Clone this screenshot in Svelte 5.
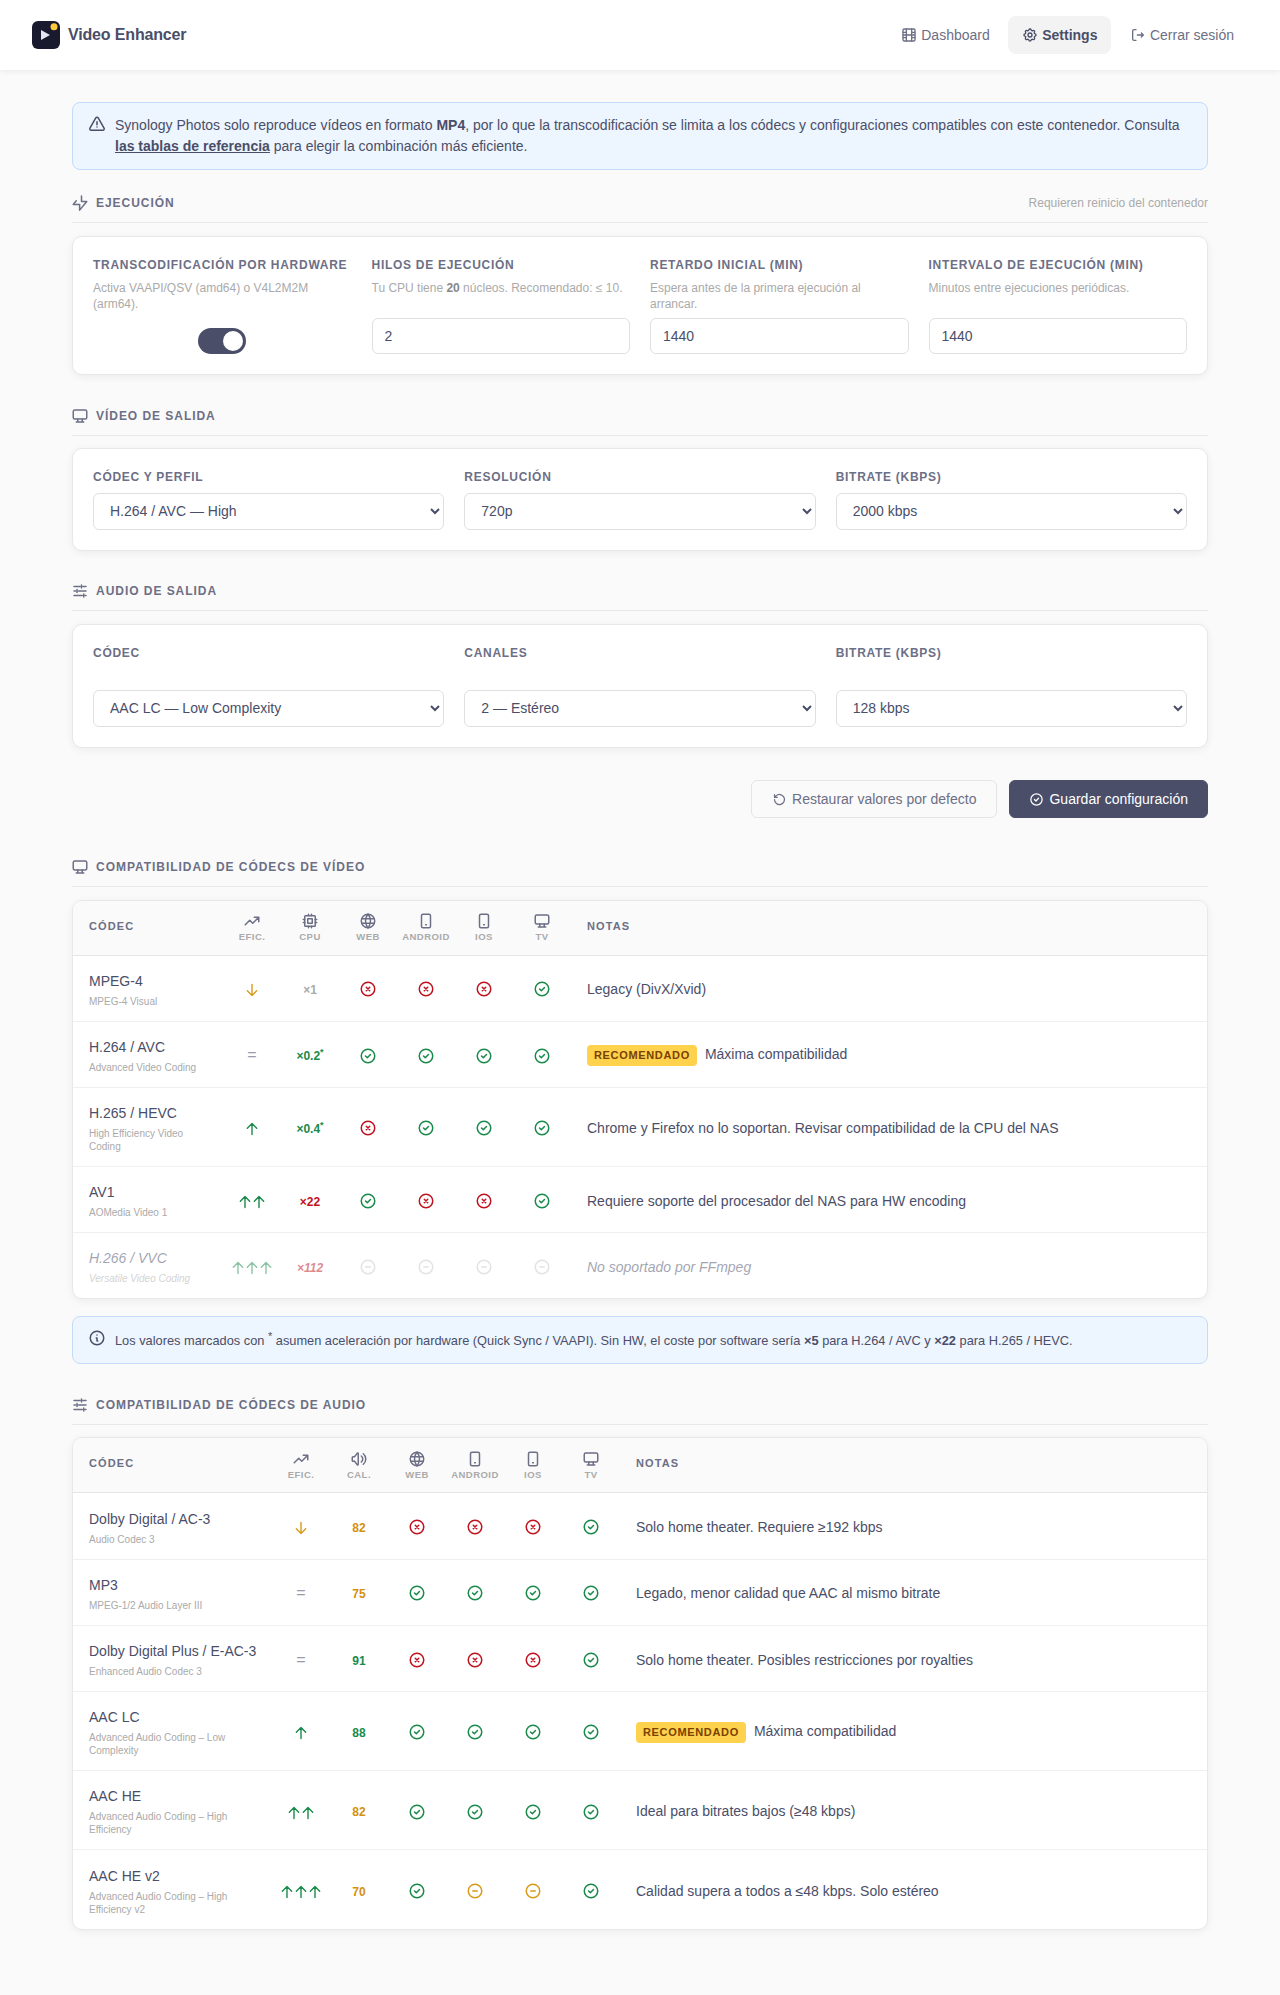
<script>
  const videoRows = [
    { name: 'MPEG-4', sub: 'MPEG-4 Visual', eff: -1, val: '×1', tone: 'muted', status: 'nnny', note: 'Legacy (DivX/Xvid)' },
    { name: 'H.264 / AVC', sub: 'Advanced Video Coding', eff: 0, val: '×0.2', star: true, tone: 'good', status: 'yyyy', badge: true, note: 'Máxima compatibilidad' },
    { name: 'H.265 / HEVC', sub: 'High Efficiency Video Coding', eff: 1, val: '×0.4', star: true, tone: 'good', status: 'nyyy', note: 'Chrome y Firefox no lo soportan. Revisar compatibilidad de la CPU del NAS' },
    { name: 'AV1', sub: 'AOMedia Video 1', eff: 2, val: '×22', tone: 'bad', status: 'ynny', note: 'Requiere soporte del procesador del NAS para HW encoding' },
    { name: 'H.266 / VVC', sub: 'Versatile Video Coding', eff: 3, val: '×112', tone: 'bad', status: 'dddd', note: 'No soportado por FFmpeg', off: true }
  ];
  const audioRows = [
    { name: 'Dolby Digital / AC-3', sub: 'Audio Codec 3', eff: -1, val: '82', tone: 'warn', status: 'nnny', note: 'Solo home theater. Requiere ≥192 kbps' },
    { name: 'MP3', sub: 'MPEG-1/2 Audio Layer III', eff: 0, val: '75', tone: 'warn', status: 'yyyy', note: 'Legado, menor calidad que AAC al mismo bitrate' },
    { name: 'Dolby Digital Plus / E-AC-3', sub: 'Enhanced Audio Codec 3', eff: 0, val: '91', tone: 'good', status: 'nnny', note: 'Solo home theater. Posibles restricciones por royalties' },
    { name: 'AAC LC', sub: 'Advanced Audio Coding – Low Complexity', eff: 1, val: '88', tone: 'good', status: 'yyyy', badge: true, note: 'Máxima compatibilidad' },
    { name: 'AAC HE', sub: 'Advanced Audio Coding – High Efficiency', eff: 2, val: '82', tone: 'warn', status: 'yyyy', note: 'Ideal para bitrates bajos (≥48 kbps)' },
    { name: 'AAC HE v2', sub: 'Advanced Audio Coding – High Efficiency v2', eff: 3, val: '70', tone: 'warn', status: 'ymmy', note: 'Calidad supera a todos a ≤48 kbps. Solo estéreo' }
  ];
  const platforms = [['WEB', 'web'], ['ANDROID', 'phone'], ['IOS', 'phone'], ['TV', 'tv']];
  const selects = {
    video: [['Códec y perfil', 'H.264 / AVC — High'], ['Resolución', '720p'], ['Bitrate (kbps)', '2000 kbps']],
    audio: [['Códec', 'AAC LC — Low Complexity'], ['Canales', '2 — Estéreo'], ['Bitrate (kbps)', '128 kbps']]
  };
</script>

{#snippet icon(kind, cls = 'i18')}
  <svg class={cls} viewBox="0 0 24 24" fill="none" stroke="currentColor" stroke-width="2" stroke-linecap="round" stroke-linejoin="round" aria-hidden="true">
    {#if kind === 'bolt'}
      <path d="M14 2.500v7.500h7l-9.500 11.500v-7.500H3l4-5" />
    {:else if kind === 'tv'}
      <rect x="3" y="4" width="18" height="12" rx="2" /><path d="M7 20h10M9 16v4M15 16v4" />
    {:else if kind === 'sliders'}
      <path d="M4 6h8M16 6h4M14 4v4M4 12h2M10 12h10M8 10v4M4 18h11M19 18h1M17 16v4" />
    {:else if kind === 'trend'}
      <path d="M3 17l6-6 4 4 8-8M15 7h6v6" />
    {:else if kind === 'cpu'}
      <rect x="5" y="5" width="14" height="14" rx="1" /><rect x="9" y="9" width="6" height="6" /><path d="M3 10h2M3 14h2M10 3v2M14 3v2M21 10h-2M21 14h-2M14 21v-2M10 21v-2" />
    {:else if kind === 'web'}
      <circle cx="12" cy="12" r="9" /><path d="M3.6 9h16.8M3.6 15h16.8M11.5 3a17 17 0 0 0 0 18M12.5 3a17 17 0 0 1 0 18" />
    {:else if kind === 'phone'}
      <rect x="6" y="3" width="12" height="18" rx="2" /><path d="M11.5 17h1" />
    {:else if kind === 'vol'}
      <path d="M15 8a5 5 0 0 1 0 8M17.7 5a9 9 0 0 1 0 14M6 15H4a1 1 0 0 1-1-1v-4a1 1 0 0 1 1-1h2l3.5-4.5A.8.8 0 0 1 11 5v14a.8.8 0 0 1-1.500.5L6 15" />
    {:else if kind === 'y'}
      <circle cx="12" cy="12" r="9" /><path d="M8.700 12l2.400 2.400 4.200-4.400" />
    {:else if kind === 'n'}
      <circle cx="12" cy="12" r="9" /><path d="M9.700 9.700l4.600 4.600M14.300 9.700l-4.600 4.600" />
    {:else if kind === 'm' || kind === 'd'}
      <circle cx="12" cy="12" r="9" /><path d="M9 12h6" />
    {:else if kind === 'warn'}
      <path d="M12 9v4M12 16h.01" /><path d="M10.4 3.9L2.6 17.500A1.900 1.900 0 0 0 4.200 20.300h15.600a1.900 1.900 0 0 0 1.600-2.800L13.600 3.900a1.900 1.900 0 0 0-3.200 0z" />
    {:else if kind === 'info'}
      <circle cx="12" cy="12" r="9" /><path d="M12 8h.01M11 12h1v4h1" />
    {:else if kind === 'film'}
      <rect x="3" y="3" width="18" height="18" rx="2" /><path d="M8 3v18M16 3v18M3 12h18M3 8h5M3 16h5M16 8h5M16 16h5" />
    {:else if kind === 'gear'}
      <path d="M10.300 4.300c.4-1.800 3-1.800 3.400 0a1.700 1.700 0 0 0 2.600 1.100c1.500-.9 3.300.8 2.400 2.400a1.700 1.700 0 0 0 1 2.500c1.800.4 1.800 3 0 3.400a1.700 1.700 0 0 0-1 2.600c.9 1.500-.9 3.300-2.400 2.400a1.700 1.700 0 0 0-2.600 1c-.4 1.800-3 1.800-3.400 0a1.700 1.700 0 0 0-2.600-1c-1.500.9-3.300-.9-2.400-2.400a1.700 1.700 0 0 0-1-2.600c-1.800-.4-1.800-3 0-3.400a1.700 1.700 0 0 0 1-2.500c-.9-1.600.9-3.300 2.400-2.400a1.700 1.700 0 0 0 2.600-1.100z" /><circle cx="12" cy="12" r="3" />
    {:else if kind === 'logout'}
      <path d="M9 4H6a2 2 0 0 0-2 2v12a2 2 0 0 0 2 2h3M11 12h9M17 9l3 3-3 3" />
    {:else if kind === 'undo'}
      <path d="M4 12a8 8 0 1 0 2.500-5.800L4 8.500M4 4v4.500h4.500" />
    {/if}
  </svg>
{/snippet}

{#snippet effCell(eff)}
  {#if eff === 0}
    <span class="equal">=</span>
  {:else if eff < 0}
    <span class="arrows down">
      <svg viewBox="3 3 18 18" fill="none" stroke="currentColor" stroke-width="1.800" stroke-linecap="round" stroke-linejoin="round"><path d="M12 5v14M18 13l-6 6M6 13l6 6" /></svg>
    </span>
  {:else}
    <span class="arrows up">
      {#each Array(eff) as _}
        <svg viewBox="3 3 18 18" fill="none" stroke="currentColor" stroke-width="1.800" stroke-linecap="round" stroke-linejoin="round"><path d="M12 5v14M18 11l-6-6M6 11l6-6" /></svg>
      {/each}
    </span>
  {/if}
{/snippet}

{#snippet compat(rows, secondLabel, secondIcon, codecWidth)}
  <div class="card table-card">
    <table>
      <colgroup>
        <col style="width:{codecWidth}px" />
        <col class="c" /><col class="c" /><col class="c" /><col class="c" /><col class="c" /><col class="c" />
        <col />
      </colgroup>
      <thead>
        <tr>
          <th class="text-head">Códec</th>
          <th><div class="hc">{@render icon('trend')}<span>EFIC.</span></div></th>
          <th><div class="hc">{@render icon(secondIcon)}<span>{secondLabel}</span></div></th>
          {#each platforms as [label, ic]}
            <th><div class="hc">{@render icon(ic)}<span>{label}</span></div></th>
          {/each}
          <th class="text-head">Notas</th>
        </tr>
      </thead>
      <tbody>
        {#each rows as r}
          <tr class:off={r.off}>
            <td class="codec"><div class="name">{r.name}</div><div class="sub">{r.sub}</div></td>
            <td class="mid">{@render effCell(r.eff)}</td>
            <td class="mid"><span class="val {r.tone}">{r.val}{#if r.star}<sup>*</sup>{/if}</span></td>
            {#each r.status.split('') as s}
              <td class="mid"><span class="st {s}">{@render icon(s)}</span></td>
            {/each}
            <td class="note">{#if r.badge}<span class="badge">RECOMENDADO</span>{/if}{r.note}</td>
          </tr>
        {/each}
      </tbody>
    </table>
  </div>
{/snippet}

{#snippet sectionHead(ic, title, aside = '')}
  <div class="sec-head">
    <span class="sec-icon">{@render icon(ic)}</span>
    <h2>{title}</h2>
    {#if aside}<span class="aside">{aside}</span>{/if}
  </div>
{/snippet}

<nav>
  <div class="brand">
    <svg class="logo" viewBox="0 0 28 28" aria-hidden="true">
      <rect width="28" height="28" rx="6" fill="#1a1a2e" />
      <path d="M9 9l9 5-9 5z" fill="#e4e6f2" />
      <circle cx="22" cy="5.700" r="3.500" fill="#ffcb3d" />
    </svg>
    <span>Video Enhancer</span>
  </div>
  <div class="links">
    <a href="#d">{@render icon('film', 'i16')}Dashboard</a>
    <a href="#s" class="active">{@render icon('gear', 'i16')}Settings</a>
    <a href="#l">{@render icon('logout', 'i16')}Cerrar sesión</a>
  </div>
</nav>

<main>
  <div class="notice">
    <span class="nicon">{@render icon('warn')}</span>
    <p>Synology Photos solo reproduce vídeos en formato <b>MP4</b>, por lo que la transcodificación se limita a los códecs y configuraciones compatibles con este contenedor. Consulta <a href="#t">las tablas de referencia</a> para elegir la combinación más eficiente.</p>
  </div>

  {@render sectionHead('bolt', 'Ejecución', 'Requieren reinicio del contenedor')}
  <section class="card form four">
    <div class="field">
      <span class="label">Transcodificación por hardware</span>
      <p class="hint">Activa VAAPI/QSV (amd64) o V4L2M2M (arm64).</p>
      <span class="toggle"><span></span></span>
    </div>
    <div class="field">
      <label class="label" for="f1">Hilos de ejecución</label>
      <p class="hint">Tu CPU tiene <b>20</b> núcleos. Recomendado: ≤ 10.</p>
      <input id="f1" value="2" />
    </div>
    <div class="field">
      <label class="label" for="f2">Retardo inicial (min)</label>
      <p class="hint">Espera antes de la primera ejecución al arrancar.</p>
      <input id="f2" value="1440" />
    </div>
    <div class="field">
      <label class="label" for="f3">Intervalo de ejecución (min)</label>
      <p class="hint">Minutos entre ejecuciones periódicas.</p>
      <input id="f3" value="1440" />
    </div>
  </section>

  {@render sectionHead('tv', 'Vídeo de salida')}
  <section class="card form three">
    {#each selects.video as [label, value]}
      <div class="field">
        <span class="label">{label}</span>
        <select><option>{value}</option></select>
      </div>
    {/each}
  </section>

  {@render sectionHead('sliders', 'Audio de salida')}
  <section class="card form three">
    {#each selects.audio as [label, value]}
      <div class="field">
        <span class="label">{label}</span>
        <div class="blank"></div>
        <select><option>{value}</option></select>
      </div>
    {/each}
  </section>

  <div class="actions">
    <button class="ghost">{@render icon('undo', 'i15')}Restaurar valores por defecto</button>
    <button class="primary">{@render icon('y', 'i15')}Guardar configuración</button>
  </div>

  {@render sectionHead('tv', 'Compatibilidad de códecs de vídeo')}
  {@render compat(videoRows, 'CPU', 'cpu', 150)}

  <div class="notice small">
    <span class="nicon">{@render icon('info')}</span>
    <p>Los valores marcados con <sup>*</sup> asumen aceleración por hardware (Quick Sync / VAAPI). Sin HW, el coste por software sería <b>×5</b> para H.264 / AVC y <b>×22</b> para H.265 / HEVC.</p>
  </div>

  {@render sectionHead('sliders', 'Compatibilidad de códecs de audio')}
  {@render compat(audioRows, 'CAL.', 'vol', 199)}
</main>

<style>
  :global(body) {
    margin: 0;
    background: #fafafa;
    color: #4a4e69;
    font-family: "Liberation Sans", Arial, sans-serif;
    font-size: 14px;
  }
  .i18 { width: 18px; height: 18px; display: block; flex: none; }
  .i16 { width: 16px; height: 16px; display: block; flex: none; }
  .i15 { width: 15px; height: 15px; display: block; flex: none; }

  nav {
    height: 70px;
    box-sizing: border-box;
    padding: 0 32px;
    display: flex;
    align-items: center;
    justify-content: space-between;
    background: #fff;
    box-shadow: 0 1px 6px rgba(0, 0, 0, 0.08);
  }
  .brand { display: flex; align-items: center; gap: 8px; font-size: 16px; font-weight: 700; letter-spacing: -0.01em; }
  .logo { width: 28px; height: 28px; display: block; }
  .links { display: flex; gap: 4.500px; }
  .links a {
    height: 38px;
    box-sizing: border-box;
    padding: 0 14px;
    display: flex;
    align-items: center;
    gap: 4px;
    color: #6c6f85;
    text-decoration: none;
    border-radius: 8px;
  }
  .links a.active { background: #f3f3f3; color: #4a4e69; font-weight: 700; }

  main { padding: 32px 72px 65px; }

  .notice {
    display: flex;
    gap: 9px;
    padding: 12px 16px;
    margin-bottom: 24px;
    background: #edf5fe;
    border: 1px solid #c4dcf8;
    border-radius: 8px;
  }
  .notice p { margin: 0; line-height: 21px; }
  .notice a { color: inherit; font-weight: 700; }
  .nicon { flex: none; margin-left: -1px; }
  .notice.small { margin: 16.500px 0 32px; padding: 13px 16px 11px; }
  .notice.small .nicon { margin-top: -1px; }
  .notice.small p { font-size: 12.800px; line-height: 22px; }
  .notice.small sup { font-size: 11px; line-height: 0; }

  .sec-head {
    display: flex;
    align-items: center;
    gap: 7px;
    height: 18px;
    padding-bottom: 10px;
    border-bottom: 1px solid #e8e8e8;
    margin-bottom: 12.500px;
    color: #6c6f85;
  }
  .sec-icon { display: block; margin-left: -1px; }
  .sec-head h2 {
    margin: 0;
    font-size: 12px;
    font-weight: 700;
    letter-spacing: 0.08em;
    text-transform: uppercase;
  }
  .aside { margin-left: auto; font-size: 12px; color: #aaa; }

  .card {
    background: #fff;
    border: 1px solid #e8e8e8;
    border-radius: 10px;
    box-shadow: 0 2px 8px rgba(0, 0, 0, 0.06);
  }
  .form { display: grid; gap: 20px; padding: 20px; margin-bottom: 31.500px; }
  .four { grid-template-columns: repeat(4, 1fr); }
  .three { grid-template-columns: repeat(3, 1fr); }
  .field { display: flex; flex-direction: column; min-width: 0; }
  .label {
    font-size: 12px;
    line-height: 16px;
    font-weight: 700;
    letter-spacing: 0.06em;
    text-transform: uppercase;
    color: #6c6f85;
    margin-bottom: 7.500px;
    white-space: nowrap;
  }
  .hint {
    margin: 0 0 6px;
    font-size: 12px;
    line-height: 16px;
    min-height: 32px;
    color: #aaa;
  }
  .hint b { color: #888; }
  .blank { height: 21.500px; }
  input, select {
    font: inherit;
    font-size: 14px;
    color: #4a4e69;
    box-sizing: border-box;
    width: 100%;
    background: #fff;
    border: 1px solid #e0e0e0;
    border-radius: 6px;
    padding: 0 12px;
    outline: none;
  }
  input { height: 36px; margin-top: auto; }
  select { height: 37px; }
  .toggle {
    margin-top: auto;
    align-self: center;
    width: 48px;
    height: 26px;
    box-sizing: border-box;
    padding: 3px;
    border-radius: 13px;
    background: #4a4e69;
    display: flex;
    justify-content: flex-end;
  }
  .toggle span { width: 20px; height: 20px; border-radius: 50%; background: #fff; }

  .actions { display: flex; justify-content: flex-end; gap: 12px; margin: 32.500px 0 40px; }
  button {
    height: 38px;
    box-sizing: border-box;
    padding: 0 20px;
    display: flex;
    align-items: center;
    gap: 5px;
    font: inherit;
    font-size: 14px;
    border-radius: 6px;
  }
  .ghost { background: transparent; color: #6c6f85; border: 1px solid #e5e5e5; }
  .primary { background: #4a4e69; color: #fff; border: 1px solid #4a4e69; padding: 0 19px; }

  .table-card { overflow: hidden; }
  table { width: 100%; border-collapse: separate; border-spacing: 0; table-layout: fixed; }
  col.c { width: 58px; }
  th {
    background: #fafafa;
    padding: 11.500px 0;
    border-bottom: 1px solid #e5e5e5;
    vertical-align: middle;
  }
  th.text-head {
    padding: 9.500px 16px 13.500px;
    text-align: left;
    font-size: 11px;
    font-weight: 700;
    letter-spacing: 0.1em;
    text-transform: uppercase;
    color: #6c6f85;
  }
  .hc { display: flex; flex-direction: column; align-items: center; gap: 1px; color: #6c6f85; }
  .hc span { font-size: 9.500px; line-height: 12px; font-weight: 700; letter-spacing: 0.05em; color: #aaa; white-space: nowrap; }
  td { padding: 15.200px 0 13px; border-bottom: 1px solid #f0f0f0; vertical-align: middle; }
  tr:last-child td { border-bottom: 0; }
  td.codec { padding-left: 16px; padding-right: 16px; }
  .name { font-size: 14px; line-height: 20px; white-space: nowrap; }
  .sub { font-size: 10px; line-height: 13px; margin-top: 4px; color: #aaa; }
  td.mid { text-align: center; }
  td.note { padding-left: 16px; padding-right: 16px; line-height: 20px; }
  .equal { font-size: 16px; color: #9a9cae; line-height: 1; }
  .arrows { display: inline-flex; justify-content: center; vertical-align: middle; }
  .arrows svg { width: 14px; height: 14px; display: block; }
  .up { color: #1a8a4a; }
  .down { color: #d99a1c; }
  .val { font-size: 12px; font-weight: 700; }
  .val sup { font-size: 9px; line-height: 0; }
  .val.muted { color: #aaa; }
  .val.good { color: #1a8a4a; }
  .val.bad { color: #c1121f; }
  .val.warn { color: #d4900f; }
  .st { display: inline-block; vertical-align: middle; }
  .st.y { color: #1a8a4a; }
  .st.n { color: #c1121f; }
  .st.m { color: #d99a1c; }
  .st.d { color: #c8c8c8; }
  .badge {
    display: inline-block;
    margin-right: 8px;
    padding: 0 7px;
    height: 21px;
    line-height: 21px;
    border-radius: 4px;
    background: #ffd24d;
    color: #7a4100;
    font-size: 11px;
    font-weight: 700;
    letter-spacing: 0.06em;
  }
  tr.off td { opacity: 0.5; font-style: italic; }
</style>
